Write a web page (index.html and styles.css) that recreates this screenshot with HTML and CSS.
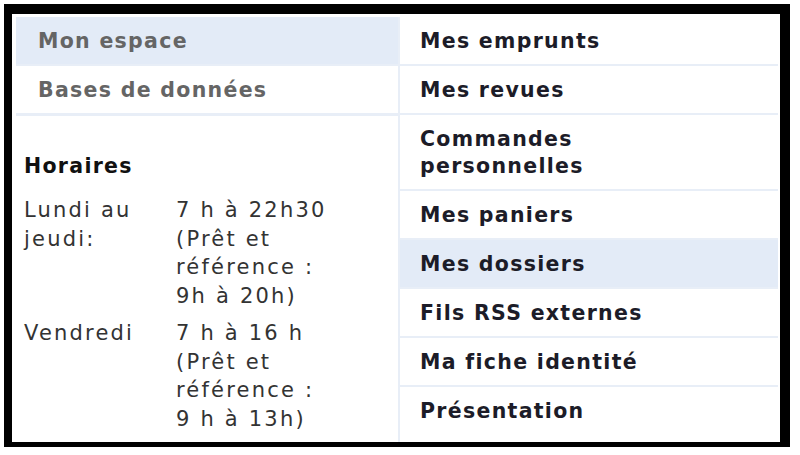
FILE: index.html
```html
<!DOCTYPE html>
<html>

<head>
    <meta charset="UTF-8">
    <title>Mon espace</title>
    <link rel="stylesheet" href="styles.css">
</head>

<body>
    <div class="frame">
        <div class="panel">
            <div class="left-col">
                <ul class="side-menu">
                    <li class="side-item active">Mon espace</li>
                    <li class="side-item">Bases de données</li>
                </ul>

                <div class="hours">
                    <h3 class="hours-title">Horaires</h3>
                    <div class="hours-row">
                        <div class="hours-day">Lundi au<br>jeudi:</div>
                        <div class="hours-time">7 h à 22h30<br>(Prêt et<br>référence :<br>9h à 20h)</div>
                    </div>
                    <div class="hours-row">
                        <div class="hours-day">Vendredi</div>
                        <div class="hours-time">7 h à 16 h<br>(Prêt et<br>référence :<br>9 h à 13h)</div>
                    </div>
                </div>
            </div>

            <ul class="right-col">
                <li class="menu-item">Mes emprunts</li>
                <li class="menu-item">Mes revues</li>
                <li class="menu-item">Commandes<br>personnelles</li>
                <li class="menu-item">Mes paniers</li>
                <li class="menu-item active">Mes dossiers</li>
                <li class="menu-item">Fils RSS externes</li>
                <li class="menu-item">Ma fiche identité</li>
                <li class="menu-item">Présentation</li>
            </ul>
        </div>
    </div>
</body>

</html>
```

FILE: styles.css
```css
body {
    margin: 0;
    background: #ffffff;
    font-family: "DejaVu Sans", Verdana, sans-serif;
}

.frame {
    margin: 4px;
    width: 768px;
    height: 425px;
    border-style: solid;
    border-color: #000000;
    border-width: 10px 10px 8px 8px;
    box-sizing: content-box;
    background: #ffffff;
    box-shadow: inset 0 0 0 1px #9a9a9a;
}

.panel {
    display: grid;
    grid-template-columns: 382px 378px;
    column-gap: 2px;
    padding: 3px 2px 0 4px;
    background: #ffffff;
}

.left-col {
    display: flex;
    flex-direction: column;
}

ul {
    margin: 0;
    padding: 0;
    list-style: none;
}

.side-item {
    padding: 11px 0 9px 22px;
    line-height: 27px;
    font-size: 20.5px;
    font-weight: bold;
    letter-spacing: 1.3px;
    color: #656565;
    border-bottom: 2px solid #e8eef7;
}

.side-item:last-child {
    border-bottom-width: 3px;
}

.side-item.active {
    background: #e3ebf7;
}

.hours {
    padding: 36px 0 0 8px;
    color: #333333;
    font-size: 21px;
    letter-spacing: 2.2px;
    line-height: 28.5px;
}

.hours-title {
    margin: 0 0 16px;
    font-size: 20.5px;
    font-weight: bold;
    letter-spacing: 1.3px;
    line-height: 28px;
    color: #111111;
}

.hours-row {
    display: grid;
    grid-template-columns: 152px 1fr;
    margin-bottom: 9px;
}

.hours-time {
    white-space: nowrap;
}

.right-col {
    border-left: 2px solid #e8eef7;
    margin-left: -2px;
}

.menu-item {
    padding: 11px 20px 9px;
    line-height: 27px;
    font-size: 20.5px;
    font-weight: bold;
    letter-spacing: 1.3px;
    color: #1c1c28;
    border-bottom: 2px solid #e8eef7;
}

.menu-item:last-child {
    border-bottom: 0;
}

.menu-item.active {
    background: #e3ebf7;
}
```
